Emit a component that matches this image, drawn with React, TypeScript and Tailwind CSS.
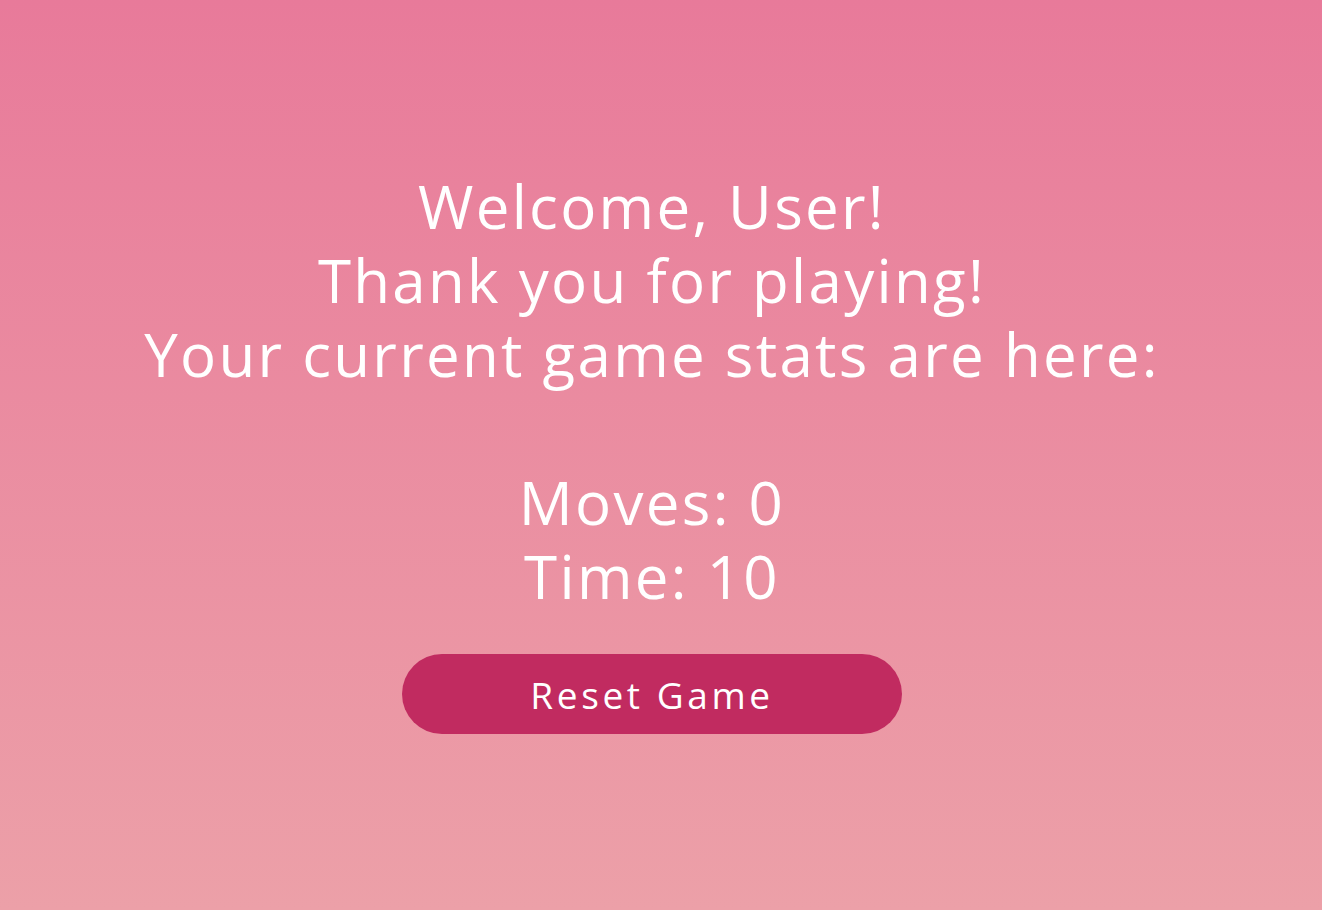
import React from "react";

export default function App() {
  return (
    <div
      className="w-full h-[910px] bg-gradient-to-b from-[#e87a9a] to-[#eca0a8] flex flex-col items-center pt-[169px] pr-[18px] text-white"
      style={{ fontFamily: '"Open Sans", "Noto Sans", sans-serif' }}
    >
      <div className="text-center text-[60px] leading-[74px] font-normal tracking-[2.3px]">
        <div>Welcome, User!</div>
        <div>Thank you for playing!</div>
        <div>Your current game stats are here:</div>
        <div>&nbsp;</div>
        <div>Moves: 0</div>
        <div>Time: 10</div>
      </div>
      <button className="mt-[41px] w-[500px] h-[80px] rounded-full bg-[#c12b60] text-white text-[37px] leading-none tracking-[3.6px]">
        Reset Game
      </button>
    </div>
  );
}
